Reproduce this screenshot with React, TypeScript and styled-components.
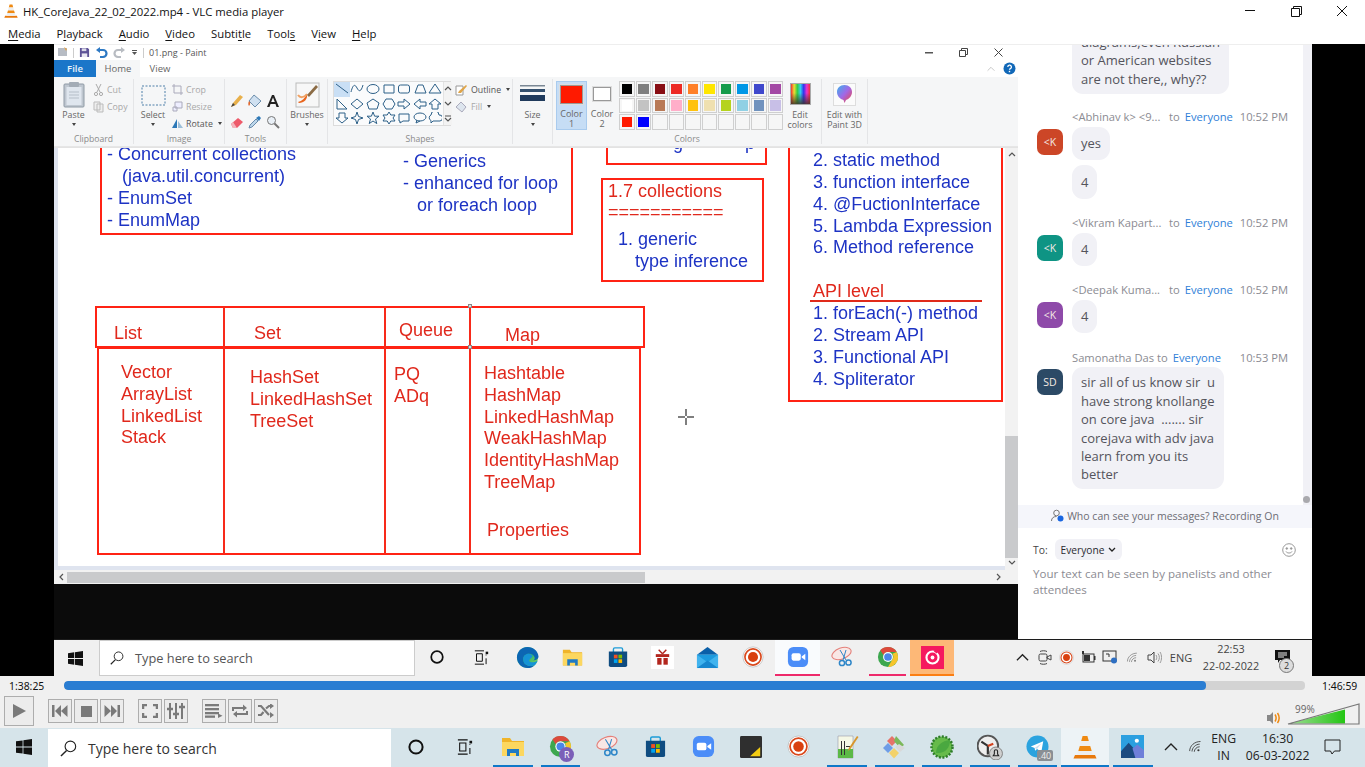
import React from "react";
import styled, { createGlobalStyle } from "styled-components";

const Global = createGlobalStyle`
  html, body { margin: 0; padding: 0; overflow: hidden; background: #fff; }
  * { box-sizing: border-box; }
`;
const UI = `"Open Sans", "Noto Sans", sans-serif`;

/* ---------- shell ---------- */
const Root = styled.div`
  width: 1365px; height: 767px; display: flex; flex-direction: column; overflow: hidden;
  font-family: ${UI}; background: #fff; color: #111;
`;
const TitleBar = styled.div`
  height: 22px; display: flex; align-items: center; padding-left: 4px; flex: none;
`;
const TitleText = styled.span`
  font-size: 11.34px; margin-left: 5px; color: #111; white-space: nowrap;
`;
const WinButtons = styled.div`
  margin-left: auto; display: flex; width: 138px; padding-right: 0;
`;
const WinBtn = styled.div`
  width: 46px; height: 22px; display: flex; align-items: center; justify-content: center;
`;
const MenuBar = styled.div`
  height: 22px; display: flex; gap: 16px; padding-left: 8px; align-items: center; flex: none;
`;
const MenuItem = styled.span`
  font-size: 11.3px; color: #111;
  u { text-underline-offset: 2px; }
`;
const VideoRow = styled.div`
  height: 632px; flex: none; display: flex; background: #000;
`;
const Letterbox = styled.div<{ $w: number }>`
  width: ${p => p.$w}px; flex: none; background: #000;
`;
const Stage = styled.div`
  width: 1258px; flex: none; display: flex; flex-direction: column;
`;
const StageTop = styled.div`
  height: 595px; flex: none; display: flex;
`;

/* ---------- paint ---------- */
const Paint = styled.div`
  width: 964px; flex: none; display: flex; flex-direction: column; background: #0b0b0b;
`;
const Qat = styled.div`
  height: 16px; flex: none; background: #fff; display: flex; align-items: center; gap: 5px;
  padding-left: 2px; border-top: 1px solid #eee; position: relative;
`;
const QatTitle = styled.span`
  font-size: 9px; color: #555;
`;
const QatSep = styled.span`
  width: 1px; height: 10px; background: #ccc;
`;
const QatBtns = styled.div`
  margin-left: auto; display: flex; padding-right: 2px;
`;
const QatBtn = styled.div`
  width: 35px; height: 14px; display: flex; align-items: center; justify-content: center;
`;
const TabRow = styled.div`
  height: 17px; flex: none; background: #fff; display: flex; align-items: stretch;
`;
const FileTab = styled.div`
  width: 42px; background: #1b76c9; color: #eaf3fb; font-size: 9.5px; font-weight: 600;
  display: flex; align-items: center; justify-content: center;
`;
const Tab = styled.div<{ $active?: boolean }>`
  width: ${p => (p.$active ? 44 : 40)}px;
  background: ${p => (p.$active ? "#f5f6f7" : "#fff")};
  color: #666; font-size: 9.5px; display: flex; align-items: center; justify-content: center;
`;
const TabRight = styled.div`
  margin-left: auto; display: flex; align-items: center; gap: 8px; padding-right: 2px;
`;
const Ribbon = styled.div`
  height: 70px; flex: none; background: #f5f6f7; display: flex; border-bottom: 1px solid #e6e6e6;
`;
const Group = styled.div<{ $w: number }>`
  width: ${p => p.$w}px; flex: none; display: flex; flex-direction: column; margin: 2px 0 2px;
  border-right: 1px solid #e4e5e7;
`;
const GroupBody = styled.div`
  height: 54px; flex: none; display: flex; padding-top: 2px;
`;
const GroupLabel = styled.div`
  font-size: 8.6px; line-height: 12px; color: #8a8a8a; text-align: center;
`;
const BigTool = styled.div<{ $w: number; $ml?: number }>`
  width: ${p => p.$w}px; margin-left: ${p => p.$ml ?? 0}px; flex: none; display: flex; flex-direction: column;
  align-items: center; font-size: 8.8px; line-height: 10px; color: #666; text-align: center;
  svg { margin-bottom: 2px; flex: none; }
`;
const Caret = styled.i`
  display: block; width: 0; height: 0; margin-top: 3px;
  border-left: 2.5px solid transparent; border-right: 2.5px solid transparent; border-top: 3px solid #444;
`;
const InlineCaret = styled(Caret)`
  display: inline-block; margin: 0 0 1px 2px;
`;
const SmallCol = styled.div<{ $ml?: number }>`
  display: flex; flex-direction: column; gap: 0; margin-left: ${p => p.$ml ?? 0}px;
`;
const SmallTool = styled.div<{ $off?: boolean }>`
  height: 17px; display: flex; align-items: center; gap: 3px; font-size: 8.8px; white-space: nowrap;
  color: ${p => (p.$off ? "#a8a8a8" : "#555")};
`;
const ToolsGrid = styled.div`
  display: grid; grid-template-columns: repeat(3, 18px); grid-auto-rows: 21px; margin: 9px 0 0 3px;
  justify-items: center; align-items: center;
`;
const ShapesBox = styled.div`
  margin-left: 5px; width: 118px; height: 45px; background: #fafbfc; border: 1px solid #dcdcdc;
  display: flex;
`;
const ShapesGrid = styled.div`
  display: grid; grid-template-columns: repeat(7, 15.6px); grid-auto-rows: 14.6px;
`;
const ShapeCell = styled.div<{ $on?: boolean }>`
  display: flex; align-items: center; justify-content: center;
  background: ${p => (p.$on ? "#c9dff5" : "transparent")};
`;
const ShapeScroll = styled.div`
  flex: 1; display: flex; flex-direction: column; justify-content: space-around; align-items: center;
  background: #f3f3f3; border-left: 1px solid #e3e3e3;
`;
const ColorBtn = styled.div<{ $on?: boolean }>`
  width: ${p => (p.$on ? 31 : 24)}px; height: 49px; margin-left: 3px; flex: none; display: flex; flex-direction: column; align-items: center;
  background: ${p => (p.$on ? "#c6ddf5" : "transparent")};
  border: 1px solid ${p => (p.$on ? "#a9cbee" : "transparent")};
  font-size: 9px; line-height: 10px; color: #666; text-align: center;
`;
const ColorChip = styled.div<{ $c: string; $s: number }>`
  width: ${p => p.$s}px; height: ${p => p.$s}px; background: ${p => p.$c}; margin: ${p => (p.$s > 20 ? 3 : 5)}px 0 ${p => (p.$s > 20 ? 5 : 8)}px;
  border: 1px solid #999; outline: 1px solid #ddd;
`;
const Palette = styled.div`
  display: grid; grid-template-columns: repeat(10, 16.5px); grid-auto-rows: 16.5px; margin-left: 5px;
`;
const PaletteCell = styled.div<{ $c?: string }>`
  width: 15.5px; height: 15.5px; border: 1px solid #cfcfcf; padding: 1.5px; background: #f6f6f6;
  &::after { content: ""; display: block; width: 100%; height: 100%; background: ${p => p.$c ?? "#f6f6f6"}; }
`;
const PaintTile = styled.div`
  width: 23px; height: 23px; background: #fbfbfb; border: 1px solid #ddd; display: flex;
  align-items: center; justify-content: center; margin-bottom: 4px; margin-top: 2px;
`;
const RainbowTile = styled.div`
  width: 21px; height: 22px; border: 1px solid #aaa; margin: 2px 0 5px;
  background: linear-gradient(180deg, transparent 45%, rgba(60,50,40,.85)), linear-gradient(90deg, #e33, #ed3, #3c4, #3ce, #33e, #e3c, #e33);
`;

const CanvasRow = styled.div`
  height: 423px; flex: none; display: flex; border-top: 1px solid #e3e3e3; background: #fff;
`;
const CanvasWrap = styled.div`
  flex: 1; padding: 0 0 4px 4px; overflow: hidden; background: #dfe4ef;
`;
const Sheet = styled.div`
  position: relative; width: 100%; height: 100%; background: #fff; overflow: hidden; filter: blur(0.35px);
  font-family: "Liberation Sans", Arial, sans-serif;
`;
const Frame = styled.div<{ $l: number; $t: number; $r: number; $b: number }>`
  position: absolute; left: ${p => p.$l - 58}px; top: ${p => p.$t - 149}px;
  width: ${p => p.$r - p.$l}px; height: ${p => p.$b - p.$t}px; border: 2px solid #ff2314;
`;
const VLine = styled.div<{ $x: number }>`
  position: absolute; left: ${p => p.$x - 59}px; top: ${307 - 149}px; width: 2px; height: ${555 - 307}px; background: #f72a1a;
`;
const HLine = styled.div`
  position: absolute; left: ${810 - 58}px; top: ${300 - 148}px; width: 172px; height: 2px; background: #e02a1a;
`;
const Note = styled.div<{ $x: number; $y: number; $red?: boolean; $size?: number }>`
  position: absolute; left: ${p => p.$x - 58}px; top: ${p => p.$y - 148 - 11}px; line-height: 22px; white-space: pre;
  font-size: ${p => p.$size ?? 18}px; color: ${p => (p.$red ? "#e0281c" : "#1d33c4")};
`;
const Handle = styled.i<{ $x: number; $y: number }>`
  position: absolute; left: ${p => p.$x - 60}px; top: ${p => p.$y - 151}px; width: 4px; height: 4px; background: #ddd; border: 1px solid #888;
`;
const CrossCursor = styled.div`
  position: absolute; left: ${686 - 58 - 9}px; top: ${417 - 148 - 9}px; width: 18px; height: 18px;
`;
const VScroll = styled.div`
  width: 13px; flex: none; background: #f2f2f2; display: flex; flex-direction: column; align-items: center;
  justify-content: space-between; padding: 3px 0 4px;
`;
const VThumb = styled.div`
  width: 13px; height: 122px; background: #c9cacc; margin-top: auto; margin-bottom: 0;
`;
const HScroll = styled.div`
  height: 14px; flex: none; background: #f2f2f2; display: flex; align-items: center; padding: 0 16px 0 4px;
`;
const HThumb = styled.div`
  width: 578px; height: 11px; background: #c9cacc; margin-left: 1px;
`;
const ScrollEnd = styled.div`
  margin-left: auto; display: flex;
`;

/* ---------- chat ---------- */
const Chat = styled.div`
  width: 294px; flex: none; background: #fff; display: flex; flex-direction: column; font-size: 12px;
  border-top: 1px solid #eee;
`;
const FeedRow = styled.div`
  height: 460px; flex: none; display: flex; overflow: hidden;
`;
const Feed = styled.div`
  flex: 1; padding-right: 0; overflow: hidden;
`;
const Track = styled.div`
  width: 9px; flex: none; background: #f1f1f6; display: flex; align-items: flex-end; padding-bottom: 2px;
`;
const Dot = styled.div`
  width: 7px; height: 7px; border-radius: 50%; background: #a9a9ad; margin-left: 0;
`;
const Bubble = styled.div<{ $ml?: number; $mt?: number; $multi?: boolean }>`
  background: #f1f1f6; border-radius: 11px; padding: ${p => (p.$multi ? "6px 9px 5.5px" : "7.5px 9px")}; line-height: 18.4px; font-size: 13px; color: #54545c;
  width: max-content; margin-left: ${p => p.$ml ?? 0}px; margin-top: ${p => p.$mt ?? 0}px; white-space: pre;
`;
const Meta = styled.div<{ $mt: number }>`
  height: 16px; margin-top: ${p => p.$mt}px; margin-left: 54px; display: flex; align-items: center;
  font-size: 11.2px; color: #8b8b92; white-space: pre;
`;
const MetaName = styled.span<{ $w: number }>`
  width: ${p => p.$w}px; flex: none;
`;
const Everyone = styled.span`
  color: #2f7fd8; margin-left: 5px;
`;
const Time = styled.span`
  margin-left: auto; margin-right: 15px; color: #8b8b92;
`;
const MsgRow = styled.div`
  margin-top: 2px; margin-left: 19px; display: flex; gap: 9px; align-items: flex-start;
`;
const Avatar = styled.div<{ $c: string; $mt: number }>`
  width: 26px; height: 26px; border-radius: 7px; background: ${p => p.$c}; color: #f4e9e4; font-size: 10.5px;
  display: flex; align-items: center; justify-content: center; margin-top: ${p => p.$mt}px; flex: none;
`;
const Notice = styled.div`
  height: 23px; flex: none; background: #f5f6fb; display: flex; align-items: center; justify-content: center; gap: 3px;
  font-size: 10.5px; color: #6d6d75; padding-bottom: 2px;
`;
const Composer = styled.div`
  flex: 1; background: #fff; padding: 11px 16px 0 15px;
`;
const ToRow = styled.div`
  display: flex; align-items: center; height: 21px; font-size: 10.4px; color: #444;
`;
const ToLabel = styled.span`
  width: 22px; flex: none;
`;
const ToSelect = styled.div`
  width: 67px; height: 21px; border-radius: 6px; background: #f1f1f6; color: #2a2a30;
  display: flex; align-items: center; justify-content: center; gap: 4px; font-size: 10.2px; font-weight: 500;
`;
const Smile = styled.div`
  margin-left: auto; display: flex;
`;
const Placeholder = styled.div`
  margin-top: 6px; font-size: 11.55px; line-height: 16px; color: #8b8b92; white-space: pre;
`;

/* ---------- taskbars ---------- */
const InnerBar = styled.div`
  height: 37px; flex: none; background: #f0f0f0; display: flex; align-items: stretch;
  border-top: 1px solid #1c1c1c;
`;
const InnerWin = styled.div`
  width: 45px; flex: none; display: flex; align-items: center; justify-content: center; padding-right: 3px;
`;
const InnerSearch = styled.div`
  width: 316px; flex: none; background: #fff; border: 1px solid #ccc; display: flex; align-items: center;
  font-size: 12.8px; color: #555; padding-left: 10px; gap: 11px;
`;
const Cell = styled.div<{ $w: number; $line?: string; $bg?: string; $inset?: number }>`
  width: ${p => p.$w}px; flex: none; display: flex; align-items: center; justify-content: center; position: relative;
  background: ${p => p.$bg ?? "transparent"}; padding-bottom: 2px;
  font-size: 11px; color: #444;
  &::after {
    content: ""; position: absolute; bottom: 0; height: 2px;
    left: ${p => p.$inset ?? 0}px; right: ${p => p.$inset ?? 0}px;
    background: ${p => p.$line ?? "transparent"};
  }
`;
const OuterCell = styled(Cell)`
  font-size: 12.5px; color: #222;
`;
const Clock = styled.div<{ $size: number; $gap: number; $c: string }>`
  text-align: center; font-size: ${p => p.$size}px; line-height: ${p => p.$gap}px; color: ${p => p.$c}; white-space: nowrap;
`;
const Tray = styled.div`
  margin-left: auto; display: flex;
`;
const Badge = styled.span`
  position: absolute; right: 6px; bottom: 3px; width: 15px; height: 15px; border-radius: 50%; background: #ddd;
  border: 1px solid #777; font-size: 9px; line-height: 13px; text-align: center; color: #333;
`;
const CountBadge = styled.span`
  position: absolute; right: 8px; bottom: 6px; background: #8a8f94; color: #eee; font-size: 9px; line-height: 11px; padding: 0 2px; border-radius: 2px;
`;
const ProfileBadge = styled.span`
  position: absolute; right: 10px; bottom: 5px; width: 15px; height: 15px; border-radius: 50%; background: #7b5fb8;
  color: #fff; font-size: 9px; line-height: 15px; text-align: center;
`;
const Bottom = styled.div`
  flex: 1; display: flex; flex-direction: column; background: #f0f0f0;
`;
const SeekRow = styled.div`
  height: 18px; flex: none; display: flex; align-items: center; padding-top: 1px;
`;
const SeekTime = styled.div<{ $w: number; $pl: number }>`
  width: ${p => p.$w}px; padding-left: ${p => p.$pl}px; flex: none; font-size: 10.4px; color: #111; font-family: "Noto Sans", sans-serif;
`;
const SeekTrack = styled.div`
  width: 1241px; flex: none; height: 9px; border-radius: 4px; background: #d3d3d3; overflow: hidden;
`;
const SeekFill = styled.div`
  height: 100%; background: #2a7dd2; border-radius: 4px;
`;
const Controls = styled.div`
  height: 34px; flex: none; display: flex; align-items: center; padding-left: 4px; gap: 14px;
`;
const CtlGroup = styled.div`
  display: flex; gap: 2px;
`;
const CtlBtn = styled.div<{ $big?: boolean }>`
  width: ${p => (p.$big ? 30 : 24)}px; height: ${p => (p.$big ? 30 : 24)}px; border: 1px solid #adadad; background: #ececec;
  display: flex; align-items: center; justify-content: center;
`;
const Volume = styled.div`
  margin-left: auto; position: relative; display: flex; align-items: flex-end; gap: 6px; padding-right: 5px; padding-top: 5px;
`;
const VolPct = styled.span`
  position: absolute; left: 29px; top: 4px; font-size: 10px; color: #666;
`;
const OuterBar = styled.div`
  height: 39px; flex: none; background: #d6e4ea; display: flex; align-items: stretch;
`;
const OuterSearch = styled.div`
  width: 343px; flex: none; background: #fff; display: flex; align-items: center; font-size: 14px; color: #333;
  padding-left: 12px; gap: 11px; margin-top: 1px;
`;

/* ---------- icons ---------- */
const Cone = ({ s = 14 }: { s?: number }) => (
  <svg width={s} height={s} viewBox="0 0 24 24">
    <path d="M2 20h20l1.5 3.5H.5z" fill="#e8790c" />
    <path d="M9.6 1h4.8l1.4 5H8.2z" fill="#ef8a12" />
    <path d="M8.2 6h7.6l1.4 5H6.8z" fill="#eee" />
    <path d="M6.8 11h10.4l1.5 5H5.3z" fill="#ef8a12" />
    <path d="M5.3 16h13.4l1.3 4H4z" fill="#eee" />
  </svg>
);
const Win = ({ s, c = "#111" }: { s: number; c?: string }) => (
  <svg width={s} height={s} viewBox="0 0 16 16"><path fill={c} d="M0 2.3 6.6 1.4V7.5H0zM7.4 1.3 16 0V7.5H7.4zM0 8.4H6.6V14.6L0 13.7zM7.4 8.4H16V16L7.4 14.7z" /></svg>
);
const Mag = ({ s, c = "#222" }: { s: number; c?: string }) => (
  <svg width={s} height={s} viewBox="0 0 18 18" fill="none" stroke={c} strokeWidth="1.2"><circle cx="11" cy="6.8" r="5.6" /><path d="M7 11 1 17" strokeWidth="1.5" /></svg>
);
const Ring = ({ s }: { s: number }) => (
  <svg width={s} height={s} viewBox="0 0 16 16" fill="none" stroke="#111" strokeWidth="2"><circle cx="8" cy="8" r="6.6" /></svg>
);
const TaskView = ({ s }: { s: number }) => (
  <svg width={s} height={s} viewBox="0 0 18 18" fill="none" stroke="#111" strokeWidth="1.2"><path d="M1 1h11M1 17h11M3 4.5h7v9H3zM14.5 5.5v1M14.5 10v7" /><rect x="14" y="2" width="3" height="3" fill="#111" stroke="none" /></svg>
);
const Folder = ({ s }: { s: number }) => (
  <svg width={s} height={s} viewBox="0 0 24 24">
    <path d="M1 3h8l2 3h12v15H1z" fill="#f0b429" /><path d="M1 7h22v14H1z" fill="#fcd75f" />
    <path d="M6 14h12v7h-3v-3H9v3H6z" fill="#1f7ac4" />
  </svg>
);
const Store = ({ s }: { s: number }) => (
  <svg width={s} height={s} viewBox="0 0 24 24">
    <path d="M7 7V3.5A1.5 1.5 0 0 1 8.500 2h7A1.500 1.500 0 0 1 17 3.500V7" fill="none" stroke="#1e9cd7" strokeWidth="1.500" />
    <path d="M2 6h20v15a2 2 0 0 1-2 2H4a2 2 0 0 1-2-2z" fill="#0f4c81" />
    <rect x="7.500" y="9.500" width="4" height="4" fill="#f25022" /><rect x="12.500" y="9.500" width="4" height="4" fill="#7fba00" />
    <rect x="7.500" y="14.500" width="4" height="4" fill="#00a4ef" /><rect x="12.500" y="14.500" width="4" height="4" fill="#ffb900" />
  </svg>
);
const Edge = ({ s }: { s: number }) => (
  <svg width={s} height={s} viewBox="0 0 24 24">
    <defs><linearGradient id="eg" x1="0" y1="0" x2="1" y2="1"><stop offset="0" stopColor="#2fc4b2" /><stop offset="0.5" stopColor="#33b56b" /><stop offset="1" stopColor="#8ad85a" /></linearGradient></defs>
    <circle cx="12" cy="12" r="11" fill="url(#eg)" />
    <path d="M12 1C5 1 1 6.500 1 12c0 6 5 11 11 11 3 0 5.500-1 7.500-3-5 2-12 .5-12-6.500 0-3 2.500-5.500 6-5.500 3.500 0 6 2 6 4.500 0 1-.5 2-1.500 2.500 3 0 5.500-1.500 5.500-4C23 5 18 1 12 1z" fill="#0c66b3" />
    <path d="M13.500 8C10 8 7.500 10.500 7.500 13.500c0 7 7 8.500 12 6.500 1.500-1.500 2.500-3 3-5-4 3-8 2-8.500 1-1-1.500 2-3 3.500-5.500-1-1.500-2.500-2.500-4-2.500z" fill="#1593d6" />
  </svg>
);
const Gift = ({ s }: { s: number }) => (
  <svg width={s} height={s} viewBox="0 0 24 24">
    <rect width="24" height="24" fill="#fff" />
    <rect x="5" y="8.500" width="14" height="3" fill="#b3261e" /><rect x="6.500" y="12.500" width="4.500" height="7" fill="#b3261e" /><rect x="13" y="12.500" width="4.500" height="7" fill="#b3261e" />
    <path d="M12 8 8 4M12 8l4-4" stroke="#b3261e" strokeWidth="1.500" fill="none" />
  </svg>
);
const Mail = ({ s }: { s: number }) => (
  <svg width={s} height={s} viewBox="0 0 24 24">
    <path d="M12 1 23 9H1z" fill="#0a5fa8" /><path d="M1 9h22v14H1z" fill="#1c9ade" /><path d="M1 9l11 8 11-8v14H1z" fill="#40b3ee" /><path d="M1 23l11-8 11 8z" fill="#1787cf" />
  </svg>
);
const Rec = ({ s }: { s: number }) => (
  <svg width={s} height={s} viewBox="0 0 24 24">
    <circle cx="12" cy="12" r="11" fill="#fff" stroke="#bbb" strokeWidth=".8" /><circle cx="12" cy="12" r="8.800" fill="none" stroke="#d9481c" strokeWidth="1.800" /><circle cx="12" cy="12" r="5.500" fill="#d9400f" />
  </svg>
);
const Zoom = ({ s }: { s: number }) => (
  <svg width={s} height={s} viewBox="0 0 24 24">
    <rect x="1" y="1" width="22" height="22" rx="6" fill="#4b8df8" />
    <rect x="5" y="8" width="10" height="8" rx="2" fill="#fff" /><path d="M16 11.500 20 8.500v7l-4-3z" fill="#fff" />
  </svg>
);
const Snip = ({ s }: { s: number }) => (
  <svg width={s} height={s} viewBox="0 0 24 24">
    <ellipse cx="10.500" cy="8.500" rx="10" ry="5.500" fill="#f9e7e5" stroke="#e4807a" strokeWidth="1.100" transform="rotate(-20 10.500 8.500)" />
    <path d="M9 5l6 10M15 5l-3 10" stroke="#2e86c8" strokeWidth="1" fill="none" />
    <circle cx="11" cy="18" r="2.600" fill="none" stroke="#2e86c8" strokeWidth="1.500" /><circle cx="17.500" cy="17.500" r="2.600" fill="none" stroke="#2e86c8" strokeWidth="1.500" />
  </svg>
);
const Chrome = ({ s }: { s: number }) => (
  <svg width={s} height={s} viewBox="0 0 24 24">
    <circle cx="12" cy="12" r="11" fill="#3da74f" />
    <path d="M12 1a11 11 0 0 1 9.500 5.500H12a5.500 5.500 0 0 0-5 3.200L3.600 4.500A11 11 0 0 1 12 1z" fill="#dc4a3c" />
    <path d="M21.500 6.500A11 11 0 0 1 12 23l4.800-8.300a5.500 5.500 0 0 0 0-6.200z" fill="#f6c52c" />
    <circle cx="12" cy="12" r="5.400" fill="#fff" /><circle cx="12" cy="12" r="4.200" fill="#4a86e8" />
  </svg>
);
const PinkTile = ({ s }: { s: number }) => (
  <svg width={s} height={s} viewBox="0 0 24 24">
    <rect width="24" height="24" fill="#f5195f" /><circle cx="12" cy="12" r="6.300" fill="none" stroke="#fff" strokeWidth="2.200" /><circle cx="12" cy="12" r="2" fill="#fff" /><path d="M14 5l3 2" stroke="#f5195f" strokeWidth="2" />
  </svg>
);
const Sticky = ({ s }: { s: number }) => (
  <svg width={s} height={s} viewBox="0 0 24 24"><rect width="24" height="24" rx="1.500" fill="#2f2f2f" /><path d="M22 12v10H11z" fill="#f3cd13" /></svg>
);
const NoteEdit = ({ s }: { s: number }) => (
  <svg width={s} height={s} viewBox="0 0 24 24">
    <path d="M3 1h15v22H3z" fill="#f5f8e6" stroke="#99a" strokeWidth=".6" /><path d="M3 14h15v9H3z" fill="#5cb947" />
    <path d="M6 6h1v14H6zM9 6h1v14H9zM11 11h4v1h-4z" fill="#333" /><path d="M22 1l1.500 1-8 12-2.500 2 .8-3z" fill="#d8962c" />
  </svg>
);
const Diamonds = ({ s }: { s: number }) => (
  <svg width={s} height={s} viewBox="0 0 24 24">
    <path d="M5 6l5-5 5 5-5 5z" fill="#e5736a" /><path d="M14 1l8 9-4 3-6-7z" fill="#7cb85a" /><path d="M1 13l5-5 5 5-5 5z" fill="#6f9de6" /><path d="M7 18l5-5 5 5-5 5.500z" fill="#f3d26b" /><path d="M13 12l4-3 6 4-5 4z" fill="#d9d9d9" />
  </svg>
);
const Spring = ({ s }: { s: number }) => (
  <svg width={s} height={s} viewBox="0 0 24 24">
    <circle cx="12" cy="12" r="10.500" fill="#66bb4a" stroke="#2f7d2b" strokeWidth="2.500" strokeDasharray="2 1.500" /><path d="M6 18C6 10 12 6 20 5c0 8-5 14-14 13z" fill="#4aa840" />
  </svg>
);
const ClockApp = ({ s }: { s: number }) => (
  <svg width={s} height={s} viewBox="0 0 24 24">
    <circle cx="10" cy="11" r="9.500" fill="#eee" stroke="#555" strokeWidth="1.800" /><path d="M10 11 4 7M10 11v8" stroke="#333" strokeWidth="2" /><path d="M10 11l5-2" stroke="#d2421f" strokeWidth="2" />
    <circle cx="17.500" cy="18" r="6" fill="#cfcfcf" stroke="#777" strokeWidth=".8" /><path d="M15 20h5l-1-1.500v-2.500a1.500 1.500 0 0 0-3 0v2.500z" fill="none" stroke="#222" strokeWidth="1" />
  </svg>
);
const Telegram = ({ s }: { s: number }) => (
  <svg width={s} height={s} viewBox="0 0 24 24"><circle cx="12" cy="12" r="11.500" fill="#2ba3df" /><path d="M5 12 18 6.500 16 17.500 11.500 14.500 9.500 16.500 9 13.500z" fill="#fff" /><path d="M9 13.500 16 8.800l-4.500 5.700" fill="#c8dff0" /></svg>
);
const Photos = ({ s }: { s: number }) => (
  <svg width={s} height={s} viewBox="0 0 24 24">
    <rect width="24" height="24" fill="#2b9fe0" /><circle cx="16.500" cy="6" r="2.200" fill="#fff" />
    <path d="M0 17 8 8l7 8 9 8H0z" fill="#1b4a80" /><path d="M12 14l5-4 7 6v8h-9z" fill="#6f7fd9" />
  </svg>
);
const WifiI = ({ s, c = "#333" }: { s: number; c?: string }) => (
  <svg width={s} height={s} viewBox="0 0 18 18" fill="none" stroke={c} strokeWidth="1"><path d="M2 14.500C2 8 8 3 15 3M4.800 15C5 10.500 9 6.200 14 6.200M7.500 15.300c.2-3 2.800-6 6.500-6" /><circle cx="12.500" cy="13.500" r="1.300" fill={c} stroke="none" /></svg>
);
const Chev = ({ s, c = "#222" }: { s: number; c?: string }) => (
  <svg width={s} height={s} viewBox="0 0 14 14" fill="none" stroke={c} strokeWidth="1.400"><path d="M1 10 7 4l6 6" /></svg>
);

const ic = "#7a7a7a";
const Prev = () => <svg width="16" height="12" viewBox="0 0 16 12" fill={ic}><rect x="0" y="0" width="2.500" height="12" /><path d="M9 0v12L3 6zM15.500 0v12l-6.500-6z" /></svg>;
const Stop = () => <svg width="11" height="11"><rect width="11" height="11" fill={ic} /></svg>;
const Next = () => <svg width="16" height="12" viewBox="0 0 16 12" fill={ic}><rect x="13.500" y="0" width="2.500" height="12" /><path d="M7 0v12l6-6zM.500 0v12L7 6z" /></svg>;
const Full = () => <svg width="16" height="14" viewBox="0 0 16 14" fill="none" stroke={ic} strokeWidth="2.500"><path d="M1 5V1h4M11 1h4v4M15 9v4h-4M5 13H1V9" /></svg>;
const Eq = () => <svg width="18" height="16" viewBox="0 0 18 16" fill="none" stroke={ic} strokeWidth="2"><path d="M3 0v16M9 0v16M15 0v16" /><path d="M0 6h6M6 11h6M12 4h6" strokeWidth="2.500" /></svg>;
const PlaylistI = () => <svg width="18" height="14" viewBox="0 0 18 14" fill={ic}><rect width="14" height="2.300" /><rect y="4" width="14" height="2.300" /><rect y="8" width="14" height="2.300" /><rect y="11.500" width="10" height="2.300" /><path d="M13 9.500v4.500l4.500-2.300z" /></svg>;
const Loop = () => <svg width="16" height="14" viewBox="0 0 16 14" fill="none" stroke={ic} strokeWidth="2"><path d="M1 7V4h11M15 7v3H4" /><path d="M11 .500 15 4l-4 3zM5 7l-4 3 4 3.500z" fill={ic} stroke="none" /></svg>;
const Shuffle = () => <svg width="16" height="14" viewBox="0 0 16 14" fill="none" stroke={ic} strokeWidth="2.200"><path d="M0 2h3l8 9M0 11h3l2.500-3M8 4.500 11 2h2" /><path d="M12 -1l4 3-4 3zM12 8l4 3-4 3z" fill={ic} stroke="none" /></svg>;
const Wedge = () => (
  <svg width="73" height="22" viewBox="0 0 73 22">
    <defs><linearGradient id="vg" x1="0" x2="1" y1="0" y2="0"><stop offset="0" stopColor="#9fdc95" /><stop offset="1" stopColor="#23c613" /></linearGradient></defs>
    <path d="M2 20.500 58 6.500V20.500z" fill="url(#vg)" />
    <path d="M1 21 72 1V21z" fill="none" stroke="#777" strokeWidth="1.200" />
  </svg>
);

const shapePaths = [
  "M1 1 13 10", "M1 9c2-8 4-8 6-4s4 4 6-3", "", "M2 2h10v8H2z", "", "M5 2h5l3 8H2z", "M7 1 13 10H1z",
  "M2 1 12 11H2z", "M7 1 13 6 7 11 1 6z", "M7 1 13 5 11 11H3L1 5z", "M4 1h6l3 5-3 5H4L1 6z", "M1 4h6V1l6 5-6 5V8H1z", "M13 4H7V1L1 6l6 5V8h6z", "M7 1 13 6H10v5H4V6H1z",
  "M4 1h6v5h3l-6 5-6-5h3z", "M7 0 8.500 4.500 13 6 8.500 7.500 7 12 5.500 7.500 1 6 5.500 4.500z", "M7 0 8.600 4.200H13L9.500 7l1.300 4.600L7 9l-3.800 2.600L4.500 7 1 4.200H5.400z", "M7 0 8.800 3H13l-2 3 2 3H8.800L7 12 5.200 9H1l2-3-2-3h4.200z", "M2 2h10v7H6l-3 2V9H2z", "", "M3 3a4 4 0 0 1 8 0 3 3 0 0 1 1 6H5L3 11V8.500A3 3 0 0 1 3 3z",
];

const Sh = ({ i }: { i: number }) => {
  const props = { fill: "none", stroke: "#2d6088", strokeWidth: 1 };
  return (
    <svg width="14" height="12" viewBox="0 0 14 12">
      {i === 2 && <ellipse cx="7" cy="6" rx="6" ry="4.500" {...props} />}
      {i === 4 && <rect x="1.500" y="2" width="11" height="8" rx="2" {...props} />}
      {i === 19 && <><ellipse cx="7" cy="5" rx="6" ry="4" {...props} /><path d="M4 8 3 11l4-2" {...props} /></>}
      {shapePaths[i] && <path d={shapePaths[i]} {...props} />}
    </svg>
  );
};

const palette = [
  "#000000", "#7f7f7f", "#880e14", "#ed2a24", "#ff7f27", "#ffe600", "#169c4c", "#0097e6", "#3f48cc", "#a349a4",
  "#ffffff", "#c3c3c3", "#b97a57", "#ffaec9", "#ffc20e", "#efe0b0", "#b5d31d", "#90d0e4", "#7092be", "#c8bfe7",
  "#ff1a00", "#0000ff",
];

const notes: [number, number, string, boolean?][] = [
  [107, 154, "- Concurrent collections"], [122, 176, "(java.util.concurrent)"], [107, 198, "- EnumSet"], [107, 220, "- EnumMap"],
  [403, 161, "- Generics"], [403, 183, "- enhanced for loop"], [417, 205, "or foreach loop"],
  [673, 143, "g"], [745, 143, "p"],
  [608, 191, "1.7 collections", true], [608, 212, "===========", true], [618, 239, "1. generic"], [635, 261, "type inference"],
  [813, 160, "2. static method"], [813, 182, "3. function interface"], [813, 204, "4. @FuctionInterface"], [813, 226, "5. Lambda Expression"], [813, 247, "6. Method reference"],
  [813, 291, "API level", true], [813, 313, "1. forEach(-) method"], [813, 335, "2. Stream API"], [813, 357, "3. Functional API"], [813, 379, "4. Spliterator"],
  [114, 333, "List", true], [254, 333, "Set", true], [399, 330, "Queue", true], [505, 335, "Map", true],
  [121, 372, "Vector", true], [121, 394, "ArrayList", true], [121, 416, "LinkedList", true], [121, 437, "Stack", true],
  [250, 377, "HashSet", true], [250, 399, "LinkedHashSet", true], [250, 421, "TreeSet", true],
  [394, 374, "PQ", true], [394, 396, "ADq", true],
  [484, 373, "Hashtable", true], [484, 395, "HashMap", true], [484, 417, "LinkedHashMap", true], [484, 438, "WeakHashMap", true], [484, 460, "IdentityHashMap", true], [484, 482, "TreeMap", true], [487, 530, "Properties", true],
];

const ScrollTri = ({ d }: { d: string }) => (
  <svg width="8" height="8" viewBox="0 0 8 8" fill="none" stroke="#555" strokeWidth="1.200"><path d={d} /></svg>
);

const blue = "#0f78c8";

export default function App() {
  return (
    <Root>
      <Global />
      <TitleBar>
        <Cone />
        <TitleText>HK_CoreJava_22_02_2022.mp4 - VLC media player</TitleText>
        <WinButtons>
          <WinBtn><svg width="11" height="2"><rect width="10" height="1" fill="#111" /></svg></WinBtn>
          <WinBtn><svg width="11" height="11" fill="none" stroke="#111"><path d="M.500 2.500h8v8h-8zM2.500 2.500v-2h8v8h-2" /></svg></WinBtn>
          <WinBtn><svg width="12" height="12" stroke="#111"><path d="M1 1l10 10M11 1 1 11" /></svg></WinBtn>
        </WinButtons>
      </TitleBar>
      <MenuBar>
        <MenuItem><u>M</u>edia</MenuItem>
        <MenuItem>P<u>l</u>ayback</MenuItem>
        <MenuItem><u>A</u>udio</MenuItem>
        <MenuItem><u>V</u>ideo</MenuItem>
        <MenuItem>Subti<u>t</u>le</MenuItem>
        <MenuItem>Tool<u>s</u></MenuItem>
        <MenuItem>V<u>i</u>ew</MenuItem>
        <MenuItem><u>H</u>elp</MenuItem>
      </MenuBar>

      <VideoRow>
        <Letterbox $w={54} />
        <Stage>
          <StageTop>
            <Paint>
              <Qat>
                <svg width="12" height="13" viewBox="0 0 12 13"><rect x="2" y="2" width="9" height="8" fill="#b7bcc4" /><path d="M8 1l3 2-1 2z" fill="#e2a24a" /></svg>
                <QatSep />
                <svg width="11" height="11" viewBox="0 0 12 12"><path d="M1 1h8.500L11 2.500V11H1z" fill="#5c5196" /><rect x="3" y="1.500" width="5" height="3" fill="#d9d7e6" /><rect x="3" y="7" width="6" height="4" fill="#e9e7f2" /></svg>
                <svg width="13" height="12" viewBox="0 0 13 12" fill="none" stroke="#2d79c4" strokeWidth="2.200"><path d="M3 3h5a3.500 3.500 0 0 1 0 7H5" /><path d="M5 0 1 3l4 3z" fill="#2d79c4" stroke="none" /></svg>
                <svg width="13" height="12" viewBox="0 0 13 12" fill="none" stroke="#b8bcc2" strokeWidth="2.200"><path d="M10 3H5a3.500 3.500 0 0 0 0 7h3" /><path d="M8 0l4 3-4 3z" fill="#b8bcc2" stroke="none" /></svg>
                <svg width="7" height="7" viewBox="0 0 7 7" fill="#555"><rect x="1" y="1" width="5" height="1" /><path d="M1 3h5L3.500 6z" /></svg>
                <QatSep />
                <QatTitle>01.png - Paint</QatTitle>
                <QatBtns>
                  <QatBtn><svg width="8" height="2"><rect width="8" height="1.500" fill="#555" /></svg></QatBtn>
                  <QatBtn><svg width="9" height="9" fill="none" stroke="#444"><path d="M.500 2.500h6v6h-6zM2.500 2.500v-2h6v6h-2" /></svg></QatBtn>
                  <QatBtn><svg width="9" height="9" stroke="#444"><path d="M.500.500l8 8M8.500.500l-8 8" /></svg></QatBtn>
                </QatBtns>
              </Qat>
              <TabRow>
                <FileTab>File</FileTab>
                <Tab $active>Home</Tab>
                <Tab>View</Tab>
                <TabRight>
                  <Chev s={8} c="#bbb" />
                  <svg width="13" height="13" viewBox="0 0 13 13"><circle cx="6.500" cy="6.500" r="6" fill="#1168b8" /><path d="M4.800 5a1.800 1.800 0 1 1 2.600 1.600c-.6.300-.9.600-.9 1.200" fill="none" stroke="#fff" strokeWidth="1.300" /><rect x="5.800" y="8.800" width="1.400" height="1.400" fill="#fff" /></svg>
                </TabRight>
              </TabRow>
              <Ribbon>
                <Group $w={80}>
                  <GroupBody>
                    <BigTool $w={39}>
                      <svg width="22" height="27" viewBox="0 0 22 27"><rect x="1" y="3" width="20" height="23" rx="1" fill="#bfc7d0" stroke="#8f9aa5" /><rect x="3.500" y="6" width="15" height="18" fill="#dfe6ee" /><rect x="6" y="1" width="10" height="5" rx="1" fill="#a3acb6" /><path d="M6 11h10M6 14h10M6 17h10" stroke="#b5bec8" /></svg>
                      <span>Paste</span><Caret />
                    </BigTool>
                    <SmallCol>
                      <SmallTool $off><svg width="11" height="12" viewBox="0 0 11 12" fill="none" stroke="#aaa"><path d="M3 0l4 8M8 0 4 8" /><circle cx="3" cy="10" r="1.600" /><circle cx="8" cy="10" r="1.600" /></svg><span>Cut</span></SmallTool>
                      <SmallTool $off><svg width="11" height="12" viewBox="0 0 11 12" fill="#eee" stroke="#bbb"><path d="M1 1h6v8H1zM4 3h6v8H4z" /></svg><span>Copy</span></SmallTool>
                    </SmallCol>
                  </GroupBody>
                  <GroupLabel>Clipboard</GroupLabel>
                </Group>
                <Group $w={91}>
                  <GroupBody>
                    <BigTool $w={34} $ml={2}>
                      <svg width="25" height="27" viewBox="0 0 25 27" fill="none"><rect x="1" y="5" width="23" height="19" stroke="#4d7ea8" strokeDasharray="2 1.500" /></svg>
                      <span>Select</span><Caret />
                    </BigTool>
                    <SmallCol $ml={2}>
                      <SmallTool $off><svg width="11" height="11" viewBox="0 0 11 11" fill="none" stroke="#aab"><path d="M2 0v9h9M0 2h9v9" /></svg><span>Crop</span></SmallTool>
                      <SmallTool $off><svg width="11" height="11" viewBox="0 0 11 11" fill="#eef" stroke="#aab"><path d="M3 1h7v6H3zM1 6h4v4H1z" /></svg><span>Resize</span></SmallTool>
                      <SmallTool><svg width="11" height="11" viewBox="0 0 11 11"><path d="M5 1v9H0z" fill="#2d79b8" /><path d="M6 3l5 7H6z" fill="#9dbfd9" /></svg><span>Rotate</span><InlineCaret /></SmallTool>
                    </SmallCol>
                  </GroupBody>
                  <GroupLabel>Image</GroupLabel>
                </Group>
                <Group $w={62}>
                  <GroupBody>
                    <ToolsGrid>
                      <svg width="14" height="14" viewBox="0 0 14 14"><path d="M1 13l2-4 7-8 3 2-7 8z" fill="#e8b04b" /><path d="M1 13l2-4 2 2z" fill="#444" /></svg>
                      <svg width="14" height="14" viewBox="0 0 14 14"><path d="M6 1l7 6-6 6-6-6z" fill="#cfe0f0" stroke="#6a8cab" /><path d="M1 7c-1 2-1 4 0 5 1-1 2-3 0-5z" fill="#e2652a" /></svg>
                      <svg width="14" height="14" viewBox="0 0 14 14"><path d="M1 13 6 1h2l5 12h-2.500l-1-3H4.500l-1 3zM5.200 8h3.600L7 3.500z" fill="#222" /></svg>
                      <svg width="14" height="14" viewBox="0 0 14 14"><path d="M1 9l7-6 5 4-6 6H3z" fill="#ee5a6a" /><path d="M1 9l2 4h4L3 7z" fill="#f4b4bc" /></svg>
                      <svg width="14" height="14" viewBox="0 0 14 14"><path d="M1 13l1-3 6-6 2 2-6 6z" fill="#bcd6ea" stroke="#6a8cab" /><path d="M8 3l3-2 2 2-2 3z" fill="#2d79b8" /></svg>
                      <svg width="14" height="14" viewBox="0 0 14 14" fill="none" stroke="#777"><circle cx="5.500" cy="5.500" r="4" fill="#e9f0f7" /><path d="M8.500 8.500 13 13" strokeWidth="2" /></svg>
                    </ToolsGrid>
                  </GroupBody>
                  <GroupLabel>Tools</GroupLabel>
                </Group>
                <Group $w={41}>
                  <GroupBody>
                    <BigTool $w={38} $ml={1}>
                      <svg width="25" height="27" viewBox="0 0 25 27"><rect x="1" y="2" width="23" height="24" fill="#f7f7f7" stroke="#bbb" /><path d="M3 21c4-1 7-4 9-8 1 5-3 9-8 9z" fill="#e8651e" /><path d="M3 14c2 3 6 3 9-1" fill="none" stroke="#f0a060" strokeWidth="2" /><path d="M21 4 12 14l2 2 9-10z" fill="#8b6b45" /></svg>
                      <span>Brushes</span><Caret />
                    </BigTool>
                  </GroupBody>
                </Group>
                <Group $w={185}>
                  <GroupBody>
                    <ShapesBox>
                      <ShapesGrid>
                        {shapePaths.map((_, i) => (
                          <ShapeCell key={i} $on={i === 0}><Sh i={i} /></ShapeCell>
                        ))}
                      </ShapesGrid>
                      <ShapeScroll>
                        <ScrollTri d="M1 5l3-3 3 3" /><ScrollTri d="M1 3l3 3 3-3" /><ScrollTri d="M1 2h6M1 4l3 3 3-3" />
                      </ShapeScroll>
                    </ShapesBox>
                    <SmallCol $ml={4}>
                      <SmallTool><svg width="13" height="12" viewBox="0 0 13 12"><path d="M1 2h7v9H1z" fill="#fff" stroke="#999" /><path d="M3 9l1-2 7-6 1 1-6 7z" fill="#e0a548" /></svg><span>Outline</span><InlineCaret /></SmallTool>
                      <SmallTool $off><svg width="13" height="12" viewBox="0 0 13 12"><path d="M6 1l5 5-4 5-6-5z" fill="#dde5ee" stroke="#aab" /></svg><span>Fill</span><InlineCaret /></SmallTool>
                    </SmallCol>
                  </GroupBody>
                  <GroupLabel>Shapes</GroupLabel>
                </Group>
                <Group $w={40}>
                  <GroupBody>
                    <BigTool $w={39}>
                      <svg width="25" height="27" viewBox="0 0 25 27"><rect y="4" width="25" height="1.500" fill="#7a8794" /><rect y="8" width="25" height="3" fill="#34506e" /><rect y="14" width="25" height="6" fill="#1f3a5c" /></svg>
                      <span>Size</span><Caret />
                    </BigTool>
                  </GroupBody>
                </Group>
                <Group $w={269}>
                  <GroupBody>
                    <ColorBtn $on><ColorChip $c="#ff1a00" $s={23} /><span>Color<br />1</span></ColorBtn>
                    <ColorBtn><ColorChip $c="#ffffff" $s={18} /><span>Color<br />2</span></ColorBtn>
                    <Palette>
                      {Array.from({ length: 30 }).map((_, i) => <PaletteCell key={i} $c={palette[i]} />)}
                    </Palette>
                    <BigTool $w={26} $ml={3}>
                      <RainbowTile /><span>Edit<br />colors</span>
                    </BigTool>
                  </GroupBody>
                  <GroupLabel>Colors</GroupLabel>
                </Group>
                <Group $w={46}>
                  <GroupBody>
                    <BigTool $w={45}>
                      <PaintTile>
                        <svg width="15" height="18" viewBox="0 0 15 18"><defs><linearGradient id="p3" x1="0" x2="1" y1="0" y2="1"><stop offset="0" stopColor="#39b3ee" /><stop offset=".5" stopColor="#a267e6" /><stop offset="1" stopColor="#f0443c" /></linearGradient></defs><path d="M7.500 0C12 0 15 3 15 7c0 4-3 7-6 8l-1.500 3-1-3C3 14 0 11 0 7c0-4 3-7 7.500-7z" fill="url(#p3)" /></svg>
                      </PaintTile>
                      <span>Edit with<br />Paint 3D</span>
                    </BigTool>
                  </GroupBody>
                </Group>
              </Ribbon>
              <CanvasRow>
                <CanvasWrap>
                  <Sheet>
                    <Frame $l={100} $t={120} $r={573} $b={236} />
                    <Frame $l={606} $t={120} $r={767} $b={166} />
                    <Frame $l={601} $t={179} $r={764} $b={283} />
                    <Frame $l={788} $t={120} $r={1003} $b={403} />
                    <Frame $l={95} $t={307} $r={645} $b={349} />
                    <Frame $l={97} $t={348} $r={641} $b={556} />
                    {[224, 385, 470].map(x => <VLine key={x} $x={x} />)}
                    <HLine />
                    <Handle $x={470} $y={307} /><Handle $x={470} $y={348} />
                    {notes.map(([x, y, t, red]) => <Note key={t + x + y} $x={x} $y={y} $red={red}>{t}</Note>)}
                    <CrossCursor>
                      <svg width="18" height="18" stroke="#555"><path d="M9 1v7M9 10v7M1 9h7M10 9h7" strokeWidth="1.500" /></svg>
                    </CrossCursor>
                  </Sheet>
                </CanvasWrap>
                <VScroll>
                  <ScrollTri d="M1 5l3-3 3 3" />
                  <VThumb />
                  <ScrollTri d="M1 3l3 3 3-3" />
                </VScroll>
              </CanvasRow>
              <HScroll>
                <ScrollTri d="M5 1 2 4l3 3" />
                <HThumb />
                <ScrollEnd><ScrollTri d="M3 1l3 3-3 3" /></ScrollEnd>
              </HScroll>
            </Paint>

            <Chat>
              <FeedRow>
                <Feed>
                  <Bubble $ml={54} $mt={-18} $multi>{"diagrams,even Russian\nor American websites\nare not there,, why??"}</Bubble>
                  <Meta $mt={15}><MetaName $w={97}>{"<Abhinav k> <9..."}</MetaName><span>to</span><Everyone>Everyone</Everyone><Time>10:52 PM</Time></Meta>
                  <MsgRow><Avatar $c="#cc4627" $mt={2.5}>&lt;K</Avatar><Bubble>yes</Bubble></MsgRow>
                  <Bubble $ml={54} $mt={5}>4</Bubble>
                  <Meta $mt={16}><MetaName $w={97}>{"<Vikram Kapart..."}</MetaName><span>to</span><Everyone>Everyone</Everyone><Time>10:52 PM</Time></Meta>
                  <MsgRow><Avatar $c="#0e9484" $mt={2.5}>&lt;K</Avatar><Bubble>4</Bubble></MsgRow>
                  <Meta $mt={16}><MetaName $w={97}>{"<Deepak Kuma..."}</MetaName><span>to</span><Everyone>Everyone</Everyone><Time>10:52 PM</Time></Meta>
                  <MsgRow><Avatar $c="#8e4aa9" $mt={2.5}>&lt;K</Avatar><Bubble>4</Bubble></MsgRow>
                  <Meta $mt={16}><span>Samonatha Das to</span><Everyone>Everyone</Everyone><Time>10:53 PM</Time></Meta>
                  <MsgRow><Avatar $c="#2c4a66" $mt={2}>SD</Avatar><Bubble $multi>{"sir all of us know sir  u\nhave strong knollange\non core java  ....... sir\ncorejava with adv java\nlearn from you its\nbetter"}</Bubble></MsgRow>
                </Feed>
                <Track><Dot /></Track>
              </FeedRow>
              <Notice>
                <svg width="13" height="13" viewBox="0 0 13 13" fill="none" stroke="#777"><circle cx="5.500" cy="4" r="2.800" /><path d="M.500 12c0-3 2-4.500 5-4.500" /><circle cx="9.500" cy="9.500" r="3" fill="#1a66e0" stroke="none" /></svg>
                <span>Who can see your messages? Recording On</span>
              </Notice>
              <Composer>
                <ToRow>
                  <ToLabel>To:</ToLabel>
                  <ToSelect>
                    <span>Everyone</span>
                    <svg width="8" height="6" viewBox="0 0 8 6" fill="none" stroke="#222" strokeWidth="1.300"><path d="M1 1l3 3 3-3" /></svg>
                  </ToSelect>
                  <Smile><svg width="14" height="14" viewBox="0 0 14 14" fill="none" stroke="#999"><circle cx="7" cy="7" r="6.300" /><circle cx="4.800" cy="5.500" r=".8" fill="#999" /><circle cx="9.200" cy="5.500" r=".8" fill="#999" /><path d="M4 8.500c1 2 5 2 6 0" /></svg></Smile>
                </ToRow>
                <Placeholder>{"Your text can be seen by panelists and other\nattendees"}</Placeholder>
              </Composer>
            </Chat>
          </StageTop>

          <InnerBar>
            <InnerWin><Win s={15} /></InnerWin>
            <InnerSearch><Mag s={14} /><span>Type here to search</span></InnerSearch>
            <Cell $w={43}><Ring s={14} /></Cell>
            <Cell $w={47}><TaskView s={15} /></Cell>
            <Cell $w={45}><Edge s={23} /></Cell>
            <Cell $w={45}><Folder s={21} /></Cell>
            <Cell $w={45}><Store s={22} /></Cell>
            <Cell $w={45}><Gift s={23} /></Cell>
            <Cell $w={45}><Mail s={23} /></Cell>
            <Cell $w={45}><Rec s={22} /></Cell>
            <Cell $w={45} $bg="#f9fbfd" $line="#ee2a6b"><Zoom s={22} /></Cell>
            <Cell $w={45}><Snip s={24} /></Cell>
            <Cell $w={45} $line="#ee2a6b" $inset={4}><Chrome s={22} /></Cell>
            <Cell $w={44} $bg="#fdb877" $line="#fb7e13"><PinkTile s={23} /></Cell>
            <Tray>
              <Cell $w={24}><Chev s={13} /></Cell>
              <Cell $w={21}><svg width="14" height="15" viewBox="0 0 14 15" fill="none" stroke="#444"><rect x="1" y="4" width="8" height="7" rx="1.500" /><path d="M9 7l4-2v5l-4-2zM2 1.500c2-1 5-1 7 0M2 13.500c2 1 5 1 7 0" /></svg></Cell>
              <Cell $w={22}><Rec s={15} /></Cell>
              <Cell $w={22}><svg width="16" height="12" viewBox="0 0 16 12"><rect x="3" y="3" width="11" height="8" fill="none" stroke="#333" /><rect x="4" y="4" width="6" height="6" fill="#333" /><rect x="14" y="5" width="1.500" height="4" fill="#333" /><path d="M2 0h2v3H2z" fill="#333" /></svg></Cell>
              <Cell $w={21}><svg width="16" height="14" viewBox="0 0 16 14"><rect x="1" y="1" width="13" height="10" fill="none" stroke="#333" /><path d="M4 4h3v3" fill="none" stroke="#333" /><circle cx="12" cy="10.500" r="3" fill="#2e6fc2" /></svg></Cell>
              <Cell $w={25}><WifiI s={13} c="#777" /></Cell>
              <Cell $w={19}><svg width="15" height="13" viewBox="0 0 15 13" fill="none" stroke="#444"><path d="M1 4h3l3-3v11l-3-3H1z" /><path d="M9 4c1 1.500 1 3.500 0 5M11 2.500c1.800 2.500 1.800 5.500 0 8M13 1c2 3 2 8 0 11" stroke="#999" /></svg></Cell>
              <Cell $w={34}>ENG</Cell>
              <Cell $w={66}><Clock $size={10.8} $gap={17} $c="#444"><div>22:53</div><div>22-02-2022</div></Clock></Cell>
              <Cell $w={36}>
                <svg width="15" height="14" viewBox="0 0 15 14"><path d="M0 0h15v10H5l-2 3v-3H0z" fill="#111" /><path d="M3 3h9M3 5h9M3 7h6" stroke="#eee" /></svg>
                <Badge>2</Badge>
              </Cell>
              <Cell $w={12} />
            </Tray>
          </InnerBar>
        </Stage>
        <Letterbox $w={53} />
      </VideoRow>

      <Bottom>
        <SeekRow>
          <SeekTime $w={64} $pl={9}>1:38:25</SeekTime>
          <SeekTrack><SeekFill style={{ width: `${(1142 / 1241) * 100}%` }} /></SeekTrack>
          <SeekTime $w={60} $pl={17}>1:46:59</SeekTime>
        </SeekRow>
        <Controls>
          <CtlBtn $big><svg width="16" height="16" viewBox="0 0 16 16"><path d="M2 1l13 7-13 7z" fill="#7a7a7a" /></svg></CtlBtn>
          <CtlGroup>
            <CtlBtn><Prev /></CtlBtn><CtlBtn><Stop /></CtlBtn><CtlBtn><Next /></CtlBtn>
          </CtlGroup>
          <CtlGroup>
            <CtlBtn><Full /></CtlBtn><CtlBtn><Eq /></CtlBtn>
          </CtlGroup>
          <CtlGroup>
            <CtlBtn><PlaylistI /></CtlBtn><CtlBtn><Loop /></CtlBtn><CtlBtn><Shuffle /></CtlBtn>
          </CtlGroup>
          <Volume>
            <svg width="15" height="14" viewBox="0 0 15 14" fill="none"><path d="M1 4h3l3-3v12l-3-3H1z" fill="#888" /><path d="M9 3.500c1.300 2 1.300 5 0 7M11.500 2c2 3 2 7 0 10" stroke="#ef8a12" strokeWidth="1.500" /></svg>
            <Wedge />
            <VolPct>99%</VolPct>
          </Volume>
        </Controls>
        <OuterBar>
          <Cell $w={48}><Win s={16} /></Cell>
          <OuterSearch><Mag s={17} /><span>Type here to search</span></OuterSearch>
          <Cell $w={49}><Ring s={16} /></Cell>
          <Cell $w={49}><TaskView s={16} /></Cell>
          <Cell $w={47.7} $line={blue} $inset={4}><Folder s={24} /></Cell>
          <Cell $w={47.7} $line={blue} $inset={4}><Chrome s={23} /><ProfileBadge>R</ProfileBadge></Cell>
          <Cell $w={47.7}><Snip s={25} /></Cell>
          <Cell $w={47.7}><Store s={23} /></Cell>
          <Cell $w={47.7}><Zoom s={23} /></Cell>
          <Cell $w={47.7}><Sticky s={22} /></Cell>
          <Cell $w={47.7}><Rec s={23} /></Cell>
          <Cell $w={47.7} $line={blue} $inset={4}><NoteEdit s={24} /></Cell>
          <Cell $w={47.7} $line={blue} $inset={4}><Diamonds s={24} /></Cell>
          <Cell $w={47.7} $line={blue} $inset={4}><Spring s={24} /></Cell>
          <Cell $w={47.7} $line={blue} $inset={4}><ClockApp s={26} /></Cell>
          <Cell $w={47.7} $line={blue} $inset={4}><Telegram s={23} /><CountBadge>.40</CountBadge></Cell>
          <Cell $w={47.7} $line={blue} $bg="#edf3f6"><Cone s={24} /></Cell>
          <Cell $w={47.7} $line={blue} $inset={4}><Photos s={23} /></Cell>
          <Cell $w={28}><Chev s={14} /></Cell>
          <Cell $w={22}><WifiI s={15} /></Cell>
          <OuterCell $w={34}><Clock $size={12.2} $gap={17} $c="#222"><div>ENG</div><div>IN</div></Clock></OuterCell>
          <OuterCell $w={74}><Clock $size={12.2} $gap={17} $c="#222"><div>16:30</div><div>06-03-2022</div></Clock></OuterCell>
          <Cell $w={36}><svg width="17" height="16" viewBox="0 0 17 16" fill="none" stroke="#222"><path d="M1 1h15v11h-5.500L8 15l-1.500-3H1z" /></svg></Cell>
        </OuterBar>
      </Bottom>
    </Root>
  );
}
